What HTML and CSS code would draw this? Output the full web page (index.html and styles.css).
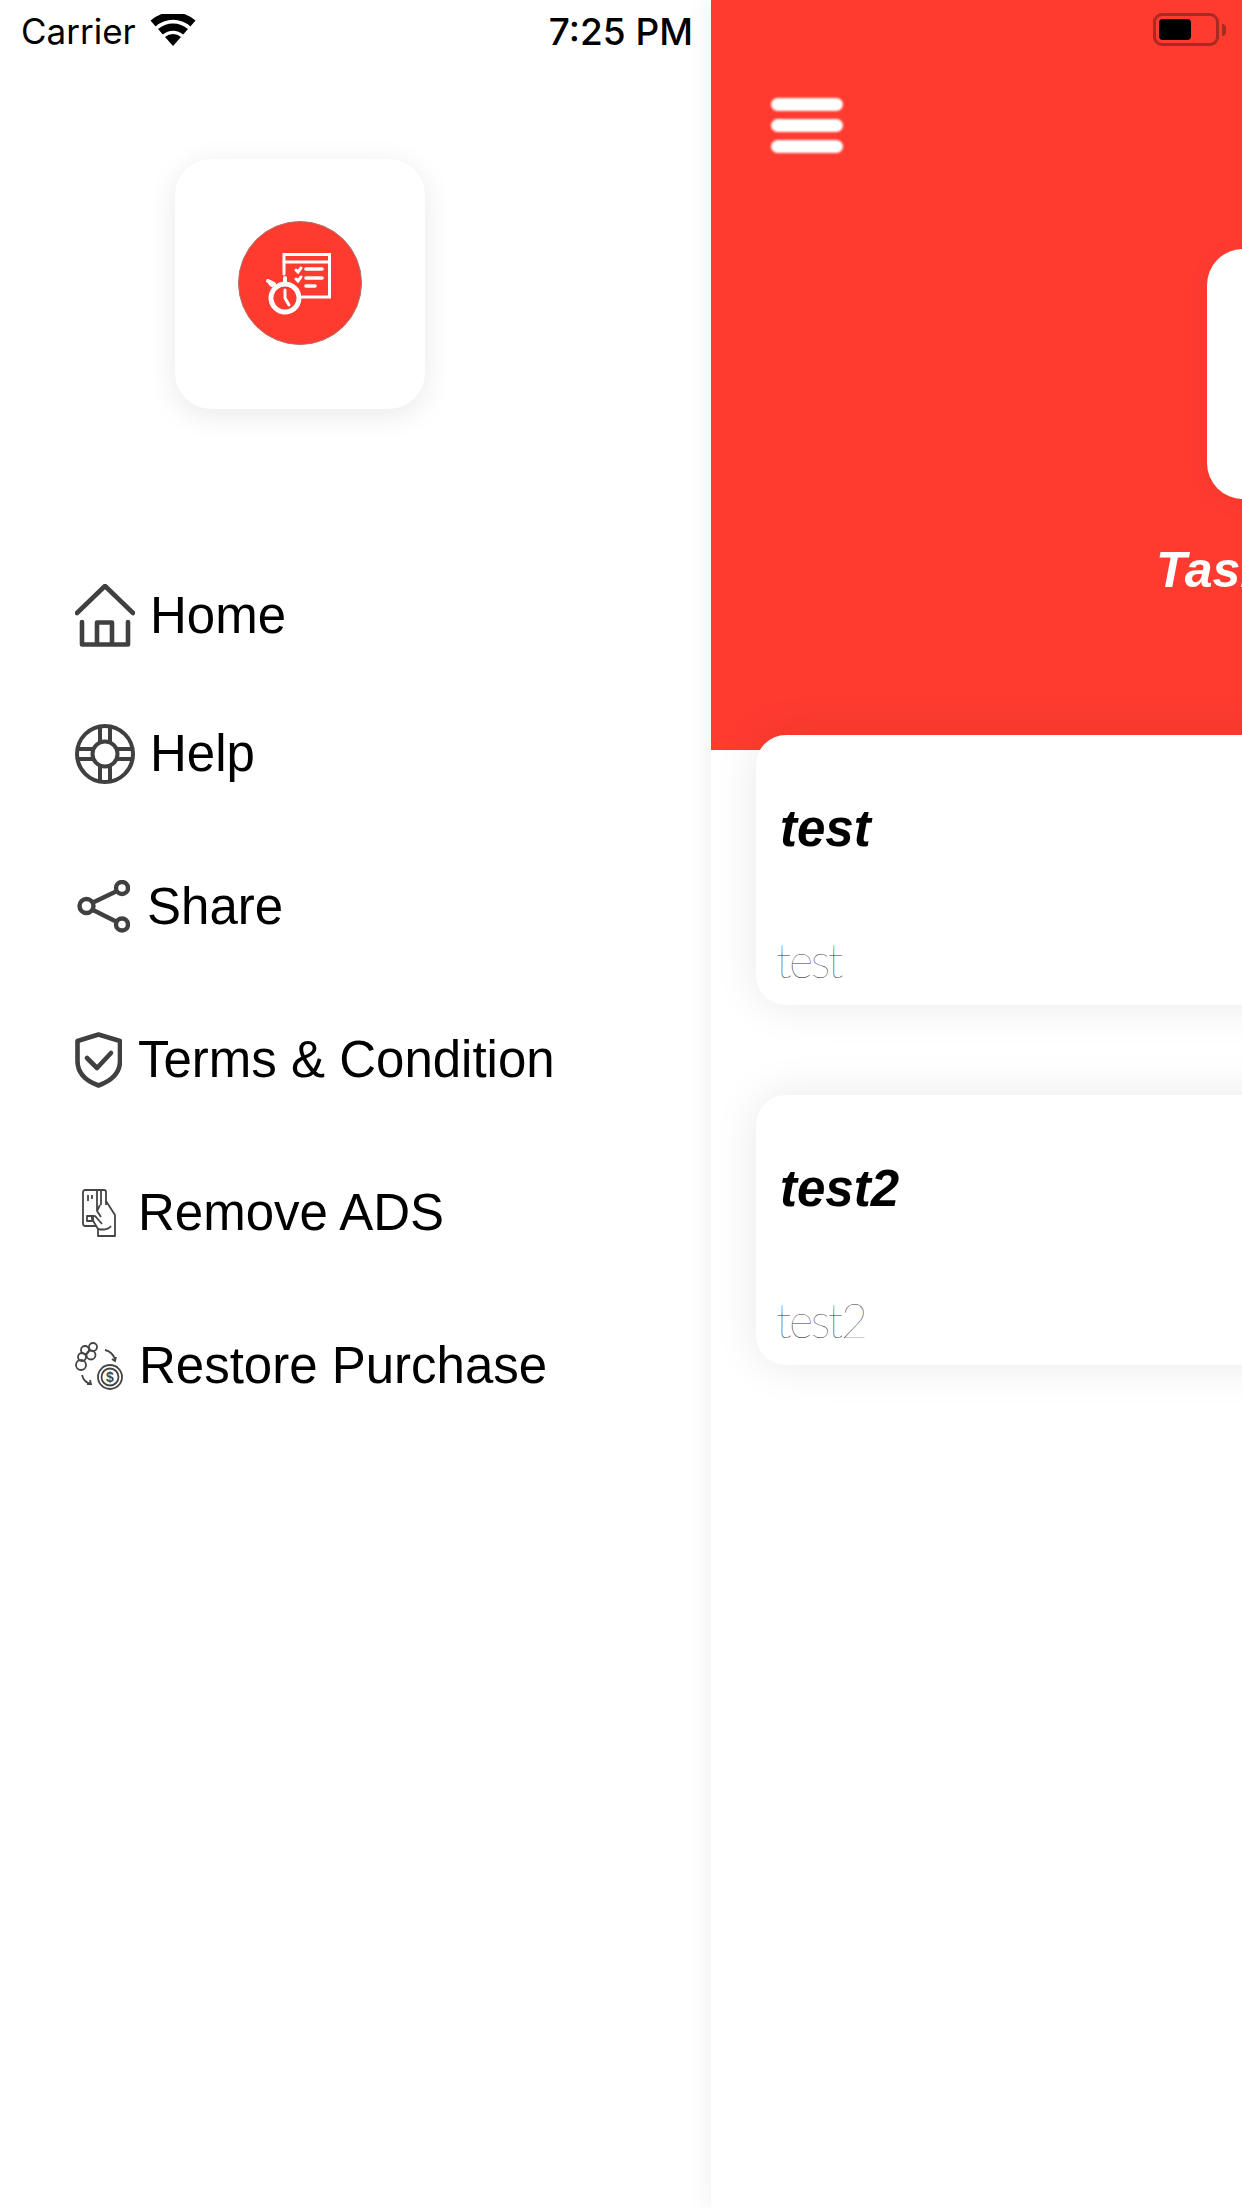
FILE: index.html
```html
<!DOCTYPE html>
<html lang="en">
<head>
  <meta charset="UTF-8" />
  <title>Task Menu</title>
  <link rel="stylesheet" href="styles.css">
</head>
<body>
  <aside class="drawer">
    <div class="status-left">
      <span class="carrier">Carrier</span>
      <svg class="wifi" viewBox="0 0 46 32"><path d="M23 32 15 23a12 12 0 0 1 16 0z"/><path d="M12.800 20.500 8 15a23 23 0 0 1 30 0l-4.800 5.500a15.600 15.600 0 0 0-20.400 0z"/><path d="M5.600 12.400 0.500 6.600a34 34 0 0 1 45 0l-5.100 5.800a26.400 26.400 0 0 0-34.800 0z"/></svg>
      <span class="time">7:25 PM</span>
    </div>

    <div class="logo-card">
      <svg class="logo-icon" viewBox="0 0 124 124">
        <circle cx="62" cy="62" r="61.500" fill="#ff3b30" stroke="#b0706a" stroke-width="1"/>
        <g fill="none" stroke="#fff" stroke-width="3" stroke-linecap="round">
          <path d="M46 53V33.500h45.500V76H64"/>
          <path d="M46 41h45.500"/>
          <path d="M68 48h16M68 57h16M68 65h9" stroke-width="3.600"/>
          <path d="M58 49l2 2 3-4M58 58l2 2 3-4" stroke-width="3"/>
          <circle cx="47" cy="77" r="14" stroke-width="5" stroke-dasharray="7 1.800"/>
          <path d="M47 69v8l4 7" stroke-width="3"/>
          <path d="M47 62v-5M34 64l-2-2M30 60l6 3" stroke-width="4"/>
        </g>
      </svg>
    </div>

    <nav class="menu">
      <div class="menu-row first">
        <svg class="ic ic-home" viewBox="0 0 60 63" fill="none" stroke="#404040" stroke-width="4.600" stroke-linecap="round" stroke-linejoin="round"><path d="M2 29 30 2l28 27"/><path d="M7 38v22.500h46V38"/><path d="M22 60V38.500h15V60"/></svg>
        <span>Home</span>
      </div>
      <div class="menu-row">
        <svg class="ic ic-help" viewBox="0 0 60 60" fill="none" stroke="#404040" stroke-width="4"><circle cx="30" cy="30" r="28"/><circle cx="30" cy="30" r="12.500"/><path d="M25 3v15M35 3v15M25 42v15M35 42v15M3 25h15M3 35h15M42 25h15M42 35h15"/></svg>
        <span>Help</span>
      </div>
      <div class="menu-row">
        <svg class="ic ic-share" viewBox="0 0 53 53" fill="none" stroke="#404040" stroke-width="4.400"><circle cx="9.500" cy="26" r="7"/><circle cx="45" cy="8" r="6"/><circle cx="45" cy="44.500" r="6"/><path d="M16 22.500 40 11M16 30l24 12"/></svg>
        <span>Share</span>
      </div>
      <div class="menu-row">
        <svg class="ic ic-terms" viewBox="0 0 47 56" fill="none" stroke="#404040" stroke-width="4.600" stroke-linecap="round" stroke-linejoin="round"><path d="M23.500 2.500 45 9v20c0 13-9 20-21.500 24.500C11 49 2.500 42 2.500 29V9z"/><path d="M12 26l10 10 14-15"/></svg>
        <span>Terms &amp; Condition</span>
      </div>
      <div class="menu-row">
        <svg class="ic ic-ads" viewBox="0 0 35 48" fill="none" stroke="#454545" stroke-width="1.800" stroke-linejoin="round"><path d="M14 37H3a2 2 0 0 1-2-2V3a2 2 0 0 1 2-2h19a2 2 0 0 1 2 2v13"/><path d="M15 1v20M19 1v15M6 6v6M10 6v4"/><rect x="5" y="27" width="6" height="5"/><path d="M24 12l9 14v21H16v-7l-6-10c-1-3 2-4 4-2l6 7"/><path d="M16 40c5 1 10 1 13-3M18 16l-3 6 4 6"/></svg>
        <span>Remove ADS</span>
      </div>
      <div class="menu-row">
        <svg class="ic ic-restore" viewBox="0 0 49 48" fill="none" stroke="#454545" stroke-width="1.800"><circle cx="18" cy="5" r="4"/><circle cx="10" cy="8" r="4"/><circle cx="16" cy="13" r="4.500"/><circle cx="7" cy="15" r="4"/><circle cx="6" cy="23" r="5"/><path d="M30 8c5 1 8 4 10 9M37 17l3 2 1-4M7 33c1 4 4 8 9 9M12 42l4 0-1-4"/><circle cx="35" cy="35" r="12"/><circle cx="35" cy="35" r="8.500"/><text x="35" y="40" class="coin">$</text></svg>
        <span>Restore Purchase</span>
      </div>
    </nav>
  </aside>

  <main class="panel">
    <header class="panel-head">
      <div class="battery">
        <div class="battery-body"><div class="battery-level"></div></div>
        <div class="battery-nub"></div>
      </div>
      <div class="burger"><span></span><span></span><span></span></div>
      <div class="head-logo"></div>
      <div class="head-title">Task</div>
    </header>

    <section class="cards">
      <div class="card">
        <div class="card-title">test</div>
        <div class="card-sub">test</div>
      </div>
      <div class="card">
        <div class="card-title">test2</div>
        <div class="card-sub">test2</div>
      </div>
    </section>
  </main>
</body>
</html>
```

FILE: styles.css
```css
* {
  box-sizing: border-box;
  margin: 0;
  padding: 0;
  font-family: 'Liberation Sans', Arial, sans-serif;
}

body {
  display: flex;
  width: 1242px;
  height: 2208px;
  overflow: hidden;
  background: #fff;
}

/* left drawer */
.drawer {
  flex: 0 0 711px;
  width: 711px;
}

.status-left {
  display: flex;
  align-items: center;
  height: 62px;
  padding: 0 18px 0 21px;
  color: #000;
}

.carrier {
  font-family: 'Inter', sans-serif;
  font-size: 35px;
}

.wifi {
  width: 46px;
  height: 32px;
  margin-left: 14px;
  margin-bottom: 3px;
}

.time {
  margin-left: auto;
  font-family: 'Inter', sans-serif;
  font-size: 37px;
  font-weight: 500;
}

.logo-card {
  display: flex;
  align-items: center;
  justify-content: center;
  width: 250px;
  height: 250px;
  margin: 97px 0 0 175px;
  padding-bottom: 2px;
  background: #fff;
  border-radius: 36px;
  box-shadow: 0 6px 30px rgba(0, 0, 0, 0.09);
}

.logo-icon {
  width: 124px;
  height: 124px;
}

.menu {
  margin-top: 145px;
}

.menu-row {
  display: flex;
  align-items: center;
  height: 153px;
  padding-left: 75px;
  font-size: 51px;
  color: #000;
}

.menu-row.first {
  height: 123px;
}

.ic {
  flex: none;
}

.ic-home { width: 60px; height: 63px; margin-right: 15px; }
.ic-help { width: 60px; height: 60px; margin-right: 15px; }
.ic-share { width: 53px; height: 53px; margin: 0 17px 0 2px; }
.ic-terms { width: 47px; height: 56px; margin-right: 16px; }
.ic-ads { width: 35px; height: 48px; margin: 0 21px 0 7px; }
.ic-restore { width: 49px; height: 48px; margin-right: 15px; }

.coin {
  font-size: 14px;
  font-weight: bold;
  text-anchor: middle;
  fill: #454545;
  stroke: none;
}

/* main panel slid to the right */
.panel {
  flex: 0 0 1242px;
  width: 1242px;
  background: #fff;
  box-shadow: 0 0 26px rgba(0, 0, 0, 0.07);
}

.panel-head {
  height: 750px;
  padding-top: 13px;
  background: #ff3b30;
}

.battery {
  display: flex;
  align-items: center;
  height: 33px;
  margin-left: 442px;
}

.battery-body {
  width: 66px;
  height: 33px;
  padding: 3px;
  border: 3px solid #a82a22;
  border-radius: 9px;
}

.battery-level {
  width: 32px;
  height: 21px;
  background: #000;
  border-radius: 4px;
}

.battery-nub {
  width: 4px;
  height: 12px;
  margin-left: 3px;
  background: #a82a22;
  border-radius: 0 4px 4px 0;
}

.burger {
  display: flex;
  flex-direction: column;
  gap: 8px;
  width: 72px;
  margin: 52px 0 0 60px;
}

.burger span {
  height: 13px;
  background: #fff;
  border-radius: 7px;
  filter: blur(1.2px);
}

.head-logo {
  width: 250px;
  height: 250px;
  margin: 96px 0 0 496px;
  background: #fff;
  border-radius: 36px;
  box-shadow: 0 4px 24px rgba(0, 0, 0, 0.05);
}

.head-title {
  margin: 42px 0 0 445px;
  font-size: 50px;
  font-weight: bold;
  font-style: italic;
  color: #fff;
}

.cards {
  display: flex;
  flex-direction: column;
  gap: 90px;
  margin: -15px 45px 0;
}

.card {
  height: 270px;
  padding: 64px 25px 0;
  background: #fff;
  border-radius: 30px;
  box-shadow: 0 0 46px rgba(0, 0, 0, 0.09);
}

.card-title {
  margin-left: -1px;
  font-size: 51px;
  font-weight: bold;
  font-style: italic;
  line-height: 60px;
  color: #000;
}

.card-sub {
  margin: 74px 0 0 -5px;
  font-family: 'Lato', sans-serif;
  font-size: 47px;
  font-weight: 100;
  letter-spacing: -2.500px;
  line-height: 54px;
  color: #333;
}
```
